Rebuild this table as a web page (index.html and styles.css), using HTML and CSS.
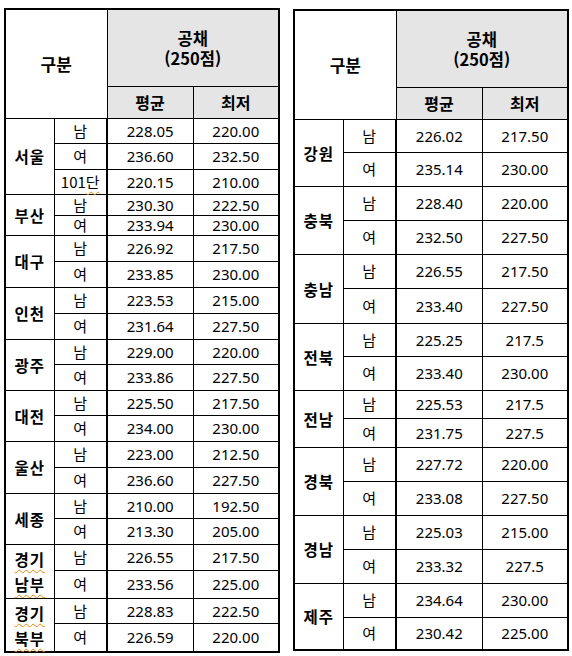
FILE: index.html
```html
<!DOCTYPE html>
<html lang="ko">
<head>
<meta charset="utf-8">
<link rel="stylesheet" href="styles.css">
</head>
<body>
<div class="page">
  <table class="score left">
    <colgroup><col class="c-reg"><col class="c-gen"><col class="c-num"><col class="c-num"></colgroup>
    <thead>
      <tr class="h1"><th class="gubun" colspan="2" rowspan="2">구분</th><th class="gong" colspan="2"><div class="gl">공채</div><div class="gl">(250점)</div></th></tr>
      <tr class="h2"><th class="sub">평균</th><th class="sub">최저</th></tr>
    </thead>
    <tbody>
      <tr class="r25"><td class="reg" rowspan="3">서울</td><td class="gen">남</td><td>228.05</td><td>220.00</td></tr>
      <tr class="r26"><td class="gen">여</td><td>236.60</td><td>232.50</td></tr>
      <tr class="r25"><td class="gen">101<span class="spell">단</span></td><td>220.15</td><td>210.00</td></tr>
      <tr class="r21"><td class="reg" rowspan="2">부산</td><td class="gen">남</td><td>230.30</td><td>222.50</td></tr>
      <tr class="r20"><td class="gen">여</td><td>233.94</td><td>230.00</td></tr>
      <tr class="r26"><td class="reg" rowspan="2">대구</td><td class="gen">남</td><td>226.92</td><td>217.50</td></tr>
      <tr class="r26"><td class="gen">여</td><td>233.85</td><td>230.00</td></tr>
      <tr class="r26"><td class="reg" rowspan="2">인천</td><td class="gen">남</td><td>223.53</td><td>215.00</td></tr>
      <tr class="r26"><td class="gen">여</td><td>231.64</td><td>227.50</td></tr>
      <tr class="r25"><td class="reg" rowspan="2">광주</td><td class="gen">남</td><td>229.00</td><td>220.00</td></tr>
      <tr class="r26"><td class="gen">여</td><td>233.86</td><td>227.50</td></tr>
      <tr class="r25"><td class="reg" rowspan="2">대전</td><td class="gen">남</td><td>225.50</td><td>217.50</td></tr>
      <tr class="r26"><td class="gen">여</td><td>234.00</td><td>230.00</td></tr>
      <tr class="r26"><td class="reg" rowspan="2">울산</td><td class="gen">남</td><td>223.00</td><td>212.50</td></tr>
      <tr class="r26"><td class="gen">여</td><td>236.60</td><td>227.50</td></tr>
      <tr class="r25"><td class="reg" rowspan="2">세종</td><td class="gen">남</td><td>210.00</td><td>192.50</td></tr>
      <tr class="r26"><td class="gen">여</td><td>213.30</td><td>205.00</td></tr>
      <tr class="r26"><td class="reg two" rowspan="2"><span class="spell">경기</span><br><span class="spell">남부</span></td><td class="gen">남</td><td>226.55</td><td>217.50</td></tr>
      <tr class="r28"><td class="gen">여</td><td>233.56</td><td>225.00</td></tr>
      <tr class="r25"><td class="reg two" rowspan="2"><span class="spell">경기</span><br><span class="spell">북부</span></td><td class="gen">남</td><td>228.83</td><td>222.50</td></tr>
      <tr class="r28"><td class="gen">여</td><td>226.59</td><td>220.00</td></tr>
    </tbody>
  </table>

  <table class="score right">
    <colgroup><col class="c-reg"><col class="c-gen"><col class="c-num"><col class="c-num"></colgroup>
    <thead>
      <tr class="h1"><th class="gubun" colspan="2" rowspan="2">구분</th><th class="gong" colspan="2"><div class="gl">공채</div><div class="gl">(250점)</div></th></tr>
      <tr class="h2"><th class="sub">평균</th><th class="sub">최저</th></tr>
    </thead>
    <tbody>
      <tr class="r33"><td class="reg" rowspan="2">강원</td><td class="gen">남</td><td>226.02</td><td>217.50</td></tr>
      <tr class="r34"><td class="gen">여</td><td>235.14</td><td>230.00</td></tr>
      <tr class="r34"><td class="reg" rowspan="2">충북</td><td class="gen">남</td><td>228.40</td><td>220.00</td></tr>
      <tr class="r34"><td class="gen">여</td><td>232.50</td><td>227.50</td></tr>
      <tr class="r34"><td class="reg" rowspan="2">충남</td><td class="gen">남</td><td>226.55</td><td>217.50</td></tr>
      <tr class="r35"><td class="gen">여</td><td>233.40</td><td>227.50</td></tr>
      <tr class="r33"><td class="reg" rowspan="2">전북</td><td class="gen">남</td><td>225.25</td><td>217.5</td></tr>
      <tr class="r34"><td class="gen">여</td><td>233.40</td><td>230.00</td></tr>
      <tr class="r28"><td class="reg" rowspan="2">전남</td><td class="gen">남</td><td>225.53</td><td>217.5</td></tr>
      <tr class="r29"><td class="gen">여</td><td>231.75</td><td>227.5</td></tr>
      <tr class="r34"><td class="reg" rowspan="2">경북</td><td class="gen">남</td><td>227.72</td><td>220.00</td></tr>
      <tr class="r34"><td class="gen">여</td><td>233.08</td><td>227.50</td></tr>
      <tr class="r34"><td class="reg" rowspan="2">경남</td><td class="gen">남</td><td>225.03</td><td>215.00</td></tr>
      <tr class="r34"><td class="gen">여</td><td>233.32</td><td>227.5</td></tr>
      <tr class="r34"><td class="reg" rowspan="2">제주</td><td class="gen">남</td><td>234.64</td><td>230.00</td></tr>
      <tr class="r33"><td class="gen">여</td><td>230.42</td><td>225.00</td></tr>
    </tbody>
  </table>
</div>
</body>
</html>
```

FILE: styles.css
```css
html, body {
  margin: 0;
  padding: 0;
  background: #ffffff;
}

.page {
  display: flex;
  align-items: flex-start;
  gap: 13px;
  padding: 8px 0 0 4px;
}

.score {
  border-collapse: collapse;
  table-layout: fixed;
  border: 2px solid #000;
  font-family: "Noto Sans", "Noto Sans CJK KR", sans-serif;
  color: #000;
}

.left { width: 274px; }
.right { width: 274px; margin-top: 1px; }

.c-reg { width: 49px; }
.c-gen { width: 53px; }
.c-num { width: 86px; }

.score th,
.score td {
  border: 1px solid #000;
  padding: 0;
  text-align: center;
  vertical-align: middle;
  line-height: 18px;
}

.score th {
  font-family: "Noto Sans CJK KR", sans-serif;
  font-weight: 700;
}

.gubun {
  font-size: 17px;
  background: #fff;
  border-right: 2px solid #000;
  border-bottom: 3px double #000;
}

.gong {
  font-size: 16.5px;
  background: #e5e5e5;
  border-bottom: 3px double #000;
  padding-top: 2px;
}

.gl {
  line-height: 20px;
  height: 20px;
}

.sub {
  font-size: 16px;
  background: #e5e5e5;
  border-bottom: 3px double #000;
}

.h1 { height: 77px; }
.h2 { height: 32px; }

.score td {
  font-size: 15px;
}

.score td.reg {
  font-family: "Noto Sans CJK KR", sans-serif;
  font-weight: 700;
  font-size: 15.5px;
  letter-spacing: 1px;
}

.score td.reg.two {
  line-height: 25px;
  padding-top: 2px;
}

.score td.gen {
  font-family: "Noto Sans CJK KR", sans-serif;
  font-size: 15px;
  border-right: 2px solid #000;
}

.spell {
  text-decoration: underline wavy #e8850c;
  text-decoration-thickness: 1px;
  text-underline-offset: 3px;
}

.r20 { height: 20px; }
.r21 { height: 21px; }
.r25 { height: 25px; }
.r26 { height: 26px; }
.r28 { height: 28px; }
.r29 { height: 29px; }
.r32 { height: 32px; }
.r33 { height: 33px; }
.r34 { height: 34px; }
.r35 { height: 35px; }
```
